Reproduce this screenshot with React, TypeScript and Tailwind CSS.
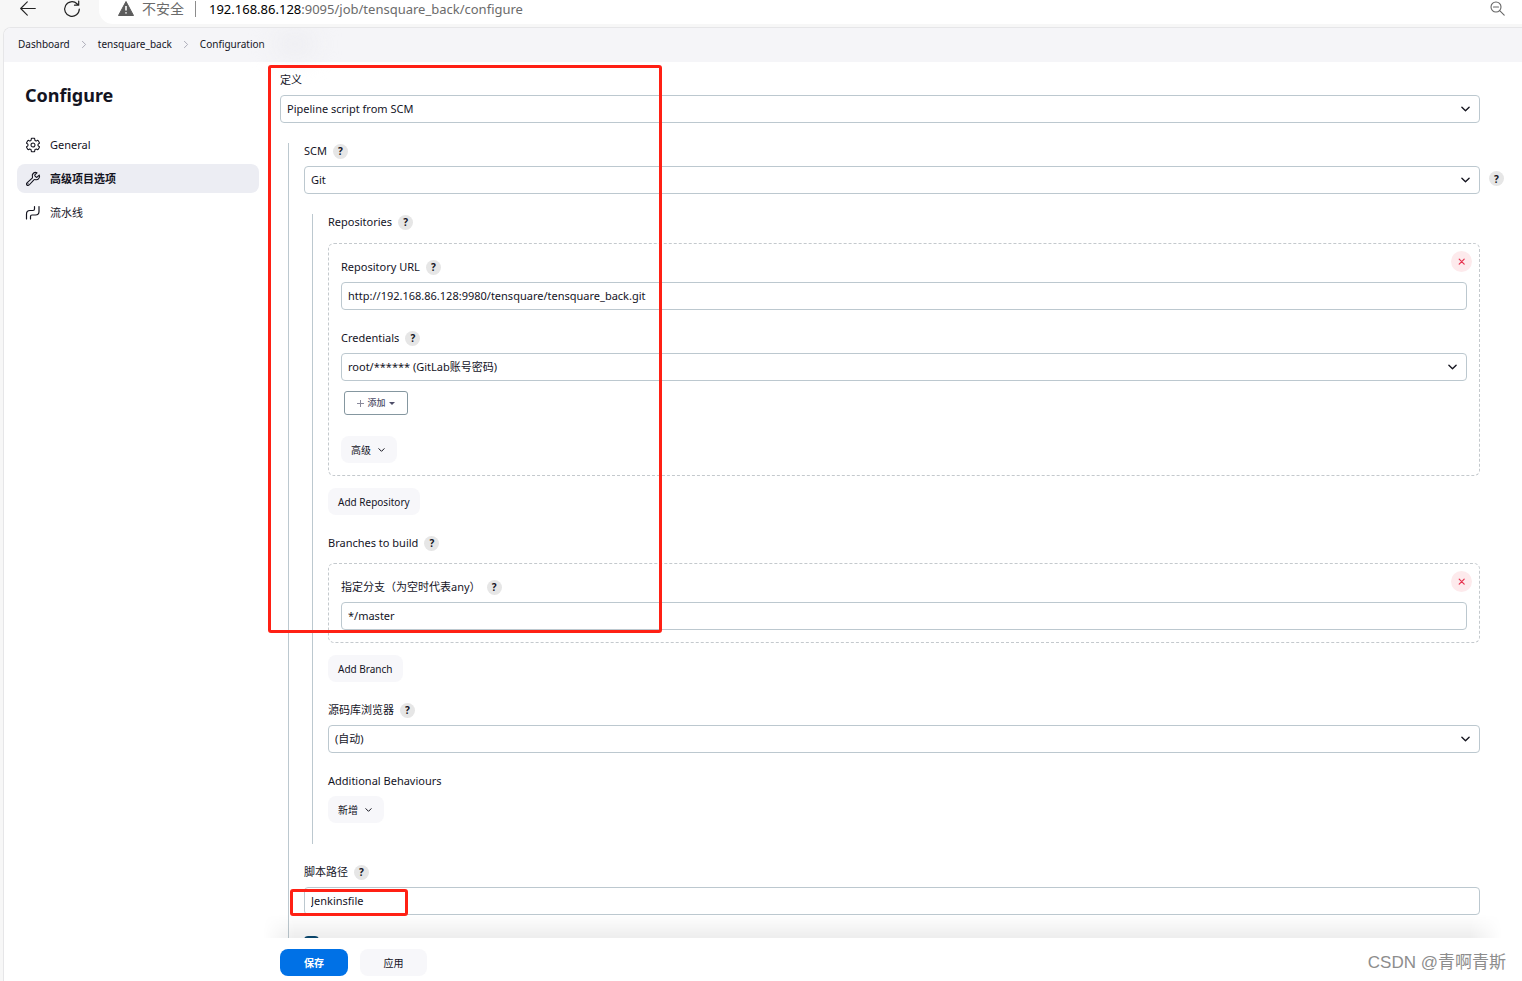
import { useState } from "react";
import type { ReactNode } from "react";
import clsx from "clsx";

const crumbs = ["Dashboard", "tensquare_back", "Configuration"];

function GearIcon() {
  return (
    <svg viewBox="0 0 512 512" className="size-4 shrink-0" fill="none" stroke="currentColor" strokeWidth="34" strokeLinecap="round" strokeLinejoin="round">
      <path d="M262.29 192.31a64 64 0 1057.4 57.4 64.13 64.13 0 00-57.4-57.4zM416.39 256a154.34 154.34 0 01-1.53 20.79l45.21 35.46a10.81 10.81 0 012.45 13.75l-42.77 74a10.81 10.81 0 01-13.14 4.59l-44.9-18.08a16.11 16.11 0 00-15.17 1.75A164.48 164.48 0 01325 400.8a15.94 15.94 0 00-8.82 12.14l-6.73 47.89a11.08 11.08 0 01-10.68 9.17h-85.54a11.11 11.11 0 01-10.69-8.87l-6.72-47.82a16.07 16.07 0 00-9-12.22 155.3 155.3 0 01-21.46-12.57 16 16 0 00-15.11-1.71l-44.89 18.07a10.81 10.81 0 01-13.14-4.58l-42.77-74a10.8 10.8 0 012.45-13.75l38.21-30a16.05 16.05 0 006-14.08c-.36-4.17-.58-8.33-.58-12.5s.21-8.27.58-12.35a16 16 0 00-6.07-13.94l-38.19-30A10.81 10.81 0 0149.48 186l42.77-74a10.81 10.81 0 0113.14-4.59l44.9 18.08a16.11 16.11 0 0015.17-1.75A164.48 164.48 0 01187 111.2a15.94 15.94 0 008.82-12.14l6.73-47.89A11.08 11.08 0 01213.23 42h85.54a11.11 11.11 0 0110.69 8.87l6.72 47.82a16.07 16.07 0 009 12.22 155.3 155.3 0 0121.46 12.57 16 16 0 0015.11 1.71l44.89-18.07a10.81 10.81 0 0113.14 4.58l42.77 74a10.8 10.8 0 01-2.45 13.75l-38.21 30a16.05 16.05 0 00-6.05 14.08c.33 4.14.55 8.3.55 12.47z" />
    </svg>
  );
}

function WrenchIcon() {
  return (
    <svg viewBox="0 0 512 512" className="size-4 shrink-0" fill="none" stroke="currentColor" strokeWidth="36" strokeLinecap="round" strokeLinejoin="round">
      <path d="M393.87 190a32.1 32.1 0 01-45.25 0l-26.57-26.57a32.09 32.09 0 010-45.26L382.19 58a1 1 0 00-.3-1.64c-38.82-16.64-89.15-8.16-121.11 23.57-30.58 30.35-32.32 76-21.12 115.84a31.93 31.93 0 01-9.06 32.08L64 380a48.17 48.17 0 1068 68l153.86-167a31.93 31.93 0 0131.6-9.13c39.54 10.59 84.54 8.6 114.72-21.19 32.49-32 39.5-88.56 23.75-120.93a1 1 0 00-1.6-.26z" />
      <circle cx="96" cy="416" r="8" fill="currentColor" />
    </svg>
  );
}

function PipeIcon() {
  return (
    <svg viewBox="0 0 16 16" className="size-4 shrink-0" fill="none" stroke="currentColor" strokeWidth="1.2" strokeLinecap="round" strokeLinejoin="round">
      <path d="M1.500 14V9a3.500 3.500 0 0 1 3.500-3.500h3A1.500 1.500 0 0 0 9.500 4V1.500" />
      <path d="M5.500 14v-2.500A1.500 1.500 0 0 1 7 10h3.500A3.500 3.500 0 0 0 14 6.500v-5" />
    </svg>
  );
}

function Chevron({ className }: { className?: string }) {
  return (
    <svg viewBox="0 0 10 6" className={clsx("pointer-events-none", className)} fill="none" stroke="currentColor" strokeLinecap="round" strokeLinejoin="round">
      <path d="M1 1l4 4 4-4" />
    </svg>
  );
}

function Help({ topic }: { topic: string }) {
  return (
    <button type="button" aria-label={`Help for ${topic}`} className="flex size-[15px] shrink-0 items-center justify-center rounded-full bg-[#e6e6e6] text-[10px] leading-none font-bold">
      ?
    </button>
  );
}

function Label({ id, text, help = true }: { id?: string; text: string; help?: boolean }) {
  return (
    <div className="flex h-4 items-center gap-[6px]">
      {id ? <label htmlFor={id}>{text}</label> : <span>{text}</span>}
      {help && <Help topic={text} />}
    </div>
  );
}

function Select({ id, options }: { id: string; options: string[] }) {
  return (
    <div className="relative mt-[7px]">
      <select id={id} className="block h-7 w-full appearance-none rounded border border-[#bcc8cf] bg-white px-[6px]">
        {options.map((option) => (
          <option key={option}>{option}</option>
        ))}
      </select>
      <Chevron className="absolute top-[11px] right-[10px] h-[6px] w-[9px] stroke-[1.5]" />
    </div>
  );
}

function TextInput({ id, initial }: { id: string; initial: string }) {
  const [value, setValue] = useState(initial);
  return (
    <input
      id={id}
      type="text"
      value={value}
      onChange={(e) => setValue(e.target.value)}
      className="mt-[7px] block h-7 w-full rounded border border-[#bcc8cf] bg-white px-[6px] pb-[2px]"
    />
  );
}

function SoftButton({ children }: { children: ReactNode }) {
  return (
    <button type="button" className="flex h-[27px] items-center gap-[7px] rounded-lg bg-[#f7f7fa] px-[10px] text-[10px]">
      {children}
    </button>
  );
}

function Chunk({ children, className }: { children: ReactNode; className?: string }) {
  return (
    <div className={clsx("relative rounded-md border border-dashed border-[#c4c9cd] px-3 pt-[15px] pb-3", className)}>
      <button type="button" aria-label="Delete" className="absolute top-[7px] right-[7px] flex size-[21px] items-center justify-center rounded-full bg-[#fdeaec] text-[#e6334f]">
        <svg viewBox="0 0 8 8" className="size-2" fill="none" stroke="currentColor" strokeWidth="1.2" strokeLinecap="round">
          <path d="M1.200 1.200l5 5M6.200 1.200l-5 5" />
        </svg>
      </button>
      {children}
    </div>
  );
}

function BrowserBar() {
  return (
    <div className="flex h-[27px] shrink-0 items-start bg-[#f7f7f7] pl-5">
      <button type="button" aria-label="Back" className="mt-[1px]">
        <svg viewBox="0 0 16 16" className="size-4" fill="none" stroke="#222" strokeWidth="1.1" strokeLinecap="round" strokeLinejoin="round">
          <path d="M15.300 7.500H.7M7.300.8L.7 7.500l6.600 6.700" />
        </svg>
      </button>
      <button type="button" aria-label="Reload" className="ml-[27px]">
        <svg viewBox="0 0 18 18" className="size-[18px]" fill="none" stroke="#222" strokeWidth="1.2" strokeLinecap="round" strokeLinejoin="round">
          <path d="M16.300 9A7.300 7.300 0 1 1 14 3.700L15.500 5M15.700 1v4.200h-4.200" />
        </svg>
      </button>
      <div className="ml-[18px] flex h-6 flex-1 items-start rounded-bl-[14px] bg-white pl-[19px] text-[13px] leading-[18px] text-[#6b6b6b]">
        <svg viewBox="0 0 16 15" className="mt-[1px] h-[15px] w-4 shrink-0">
          <path d="M8 .5l7.500 14H.5z" fill="#5c5c5c" stroke="#5c5c5c" strokeLinejoin="round" />
          <path d="M8 5v4.500M8 11.300v1.200" stroke="#fff" strokeWidth="1.6" />
        </svg>
        <span className="ml-2 text-[14px]">不安全</span>
        <span className="mt-[1px] ml-[11px] h-4 w-px bg-[#8c8c8c]" />
        <span className="ml-[13px]">
          <span className="text-black">192.168.86.128</span>:9095/job/tensquare_back/configure
        </span>
        <svg viewBox="0 0 15 15" className="mt-[1px] mr-[17px] ml-auto size-[15px]" fill="none" stroke="#666" strokeWidth="1.1" strokeLinecap="round">
          <circle cx="6" cy="6" r="5" />
          <path d="M3.500 6h5M9.700 9.700l4.500 4.500" />
        </svg>
      </div>
    </div>
  );
}

function Sidebar() {
  const items = [
    { name: "General", icon: <GearIcon /> },
    { name: "高级项目选项", icon: <WrenchIcon /> },
    { name: "流水线", icon: <PipeIcon /> },
  ];
  const [active, setActive] = useState("高级项目选项");

  return (
    <aside className="w-[255px] shrink-0 pl-[13px]">
      <h1 className="mt-[19px] mb-[21px] pl-2 text-[18px] leading-7 font-bold">Configure</h1>
      <nav className="flex flex-col gap-[5px]">
        {items.map((item) => (
          <a
            key={item.name}
            href="#"
            onClick={() => setActive(item.name)}
            className={clsx("flex h-[29px] items-center gap-[9px] rounded-lg px-2", item.name === active && "bg-[#ecedf3] font-semibold")}
          >
            {item.icon}
            {item.name}
          </a>
        ))}
      </nav>
    </aside>
  );
}

export default function App() {
  return (
    <div className="relative flex h-screen flex-col overflow-hidden bg-[#f7f7f7] font-['Noto_Sans','Noto_Sans_CJK_SC',sans-serif] text-[11px] leading-4 text-[#14141f]">
      <BrowserBar />
      <div className="ml-[3px] flex min-h-0 flex-1 flex-col overflow-hidden rounded-tl-lg border-t border-l border-[#e6e6e8] bg-white">
        <nav aria-label="Breadcrumb" className="flex h-[34px] shrink-0 items-center gap-[10px] bg-[#f5f5f8] pb-[2px] pl-[14px] text-[10px]">
          {crumbs.map((crumb, i) => (
            <span key={crumb} className="flex items-center gap-[10px]">
              {i > 0 && <Chevron className="h-[5px] w-2 -rotate-90 text-[#9a9aa8]" />}
              <a href="#">{crumb}</a>
            </span>
          ))}
          <span className="h-6 w-10 rounded-full bg-[#ededf1] blur-md" />
        </nav>

        <div className="flex min-h-0 flex-1">
          <Sidebar />
          <main className="flex min-w-0 flex-1 flex-col">
            <form className="min-h-0 flex-1 overflow-hidden pt-[10px] pr-[42px] pl-[21px]">
              <Label id="definition" text="定义" help={false} />
              <Select id="definition" options={["Pipeline script from SCM", "Pipeline script"]} />

              <div className="mt-5 ml-2 h-full border-l border-[#bcc8cf] pl-[15px]">
                <Label id="scm" text="SCM" />
                <div className="relative">
                  <Select id="scm" options={["Git", "None"]} />
                  <div className="absolute top-[5px] -right-6">
                    <Help topic="Pipeline" />
                  </div>
                </div>

                <div className="mt-5 ml-2 border-l border-[#bcc8cf] pb-[21px] pl-[15px]">
                  <Label text="Repositories" />
                  <Chunk className="mt-[13px]">
                    <Label id="repo-url" text="Repository URL" />
                    <TextInput id="repo-url" initial="http://192.168.86.128:9980/tensquare/tensquare_back.git" />
                    <div className="mt-5">
                      <Label id="credentials" text="Credentials" />
                      <Select id="credentials" options={["root/****** (GitLab账号密码)", "- 无 -"]} />
                    </div>
                    <button type="button" className="mt-[10px] mb-[21px] ml-[3px] flex h-6 w-16 items-center justify-center gap-[3px] rounded-[3px] border border-[#8597a0] text-[9px] font-medium text-[#4d4d68]">
                      <svg viewBox="0 0 7 7" className="size-[7px]" stroke="#8a8a9c">
                        <path d="M3.500 0v7M0 3.500h7" />
                      </svg>
                      添加
                      <svg viewBox="0 0 6 3" className="h-[3px] w-[6px] fill-current">
                        <path d="M0 0h6L3 3z" />
                      </svg>
                    </button>
                    <SoftButton>
                      高级
                      <Chevron className="mr-[2px] h-1 w-[7px] stroke-[1.5]" />
                    </SoftButton>
                  </Chunk>
                  <div className="mt-3 mb-5">
                    <SoftButton>Add Repository</SoftButton>
                  </div>

                  <Label text="Branches to build" />
                  <Chunk className="mt-3">
                    <Label id="branch" text="指定分支（为空时代表any）" />
                    <TextInput id="branch" initial="*/master" />
                  </Chunk>
                  <div className="mt-3 mb-5">
                    <SoftButton>Add Branch</SoftButton>
                  </div>

                  <Label id="browser" text="源码库浏览器" />
                  <Select id="browser" options={["(自动)", "gitlab"]} />

                  <div className="mt-5 flex flex-col items-start gap-[7px]">
                    <Label text="Additional Behaviours" help={false} />
                    <SoftButton>
                      新增
                      <Chevron className="mr-[2px] h-1 w-[7px] stroke-[1.5]" />
                    </SoftButton>
                  </div>
                </div>

                <div className="mt-5">
                  <Label id="script-path" text="脚本路径" />
                  <TextInput id="script-path" initial="Jenkinsfile" />
                </div>
                <input type="checkbox" aria-label="Lightweight checkout" defaultChecked className="mt-[21px] block size-[15px] appearance-none rounded bg-[#0b4a72]" />
              </div>
            </form>

            <footer className="relative flex h-[43px] shrink-0 gap-3 bg-white pt-[11px] pl-[21px] text-[10px]">
              <div className="pointer-events-none absolute right-5 bottom-full left-1 h-6 bg-linear-to-t from-black/7 to-transparent [mask-image:linear-gradient(to_right,transparent,black_32px,black_calc(100%-32px),transparent)]" />
              <button type="button" className="h-[27px] w-[68px] rounded-lg bg-[#0071e6] font-bold text-white">保存</button>
              <button type="button" className="h-[27px] w-[67px] rounded-lg bg-[#f7f7fa]">应用</button>
            </footer>
          </main>
        </div>
      </div>

      <div className="pointer-events-none absolute top-[65px] left-[268px] h-[568px] w-[394px] rounded-[3px] border-3 border-[#ff2014]" />
      <div className="pointer-events-none absolute top-[889px] left-[290px] h-[27px] w-[118px] rounded-[3px] border-3 border-[#ff2014]" />
      <p className="pointer-events-none absolute right-4 bottom-[6px] font-['Liberation_Sans','Noto_Sans_CJK_SC',sans-serif] text-[17px] leading-6 text-[#8d8d8d]">CSDN @青啊青斯</p>
    </div>
  );
}
